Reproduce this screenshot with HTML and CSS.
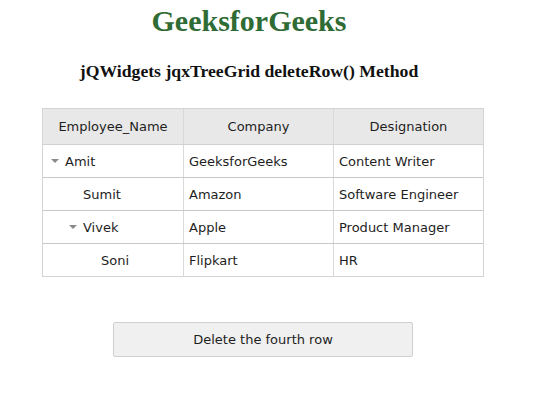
FILE: index.html
```html
<!DOCTYPE html>
<html>
<head>
<meta charset="utf-8">
<link rel="stylesheet" href="styles.css">
</head>
<body>
<div class="page">
  <h1 class="title">GeeksforGeeks</h1>
  <h3 class="subtitle">jQWidgets jqxTreeGrid deleteRow() Method</h3>
</div>
<div class="grid">
  <div class="row head">
    <div class="cell c1 center">Employee_Name</div>
    <div class="cell c2 center">Company</div>
    <div class="cell c3 center">Designation</div>
  </div>
  <div class="row">
    <div class="cell c1 lvl0"><span class="arrow"></span>Amit</div>
    <div class="cell c2">GeeksforGeeks</div>
    <div class="cell c3">Content Writer</div>
  </div>
  <div class="row">
    <div class="cell c1 lvl1">Sumit</div>
    <div class="cell c2">Amazon</div>
    <div class="cell c3">Software Engineer</div>
  </div>
  <div class="row">
    <div class="cell c1 lvl1b"><span class="arrow"></span>Vivek</div>
    <div class="cell c2">Apple</div>
    <div class="cell c3">Product Manager</div>
  </div>
  <div class="row last">
    <div class="cell c1 lvl2">Soni</div>
    <div class="cell c2">Flipkart</div>
    <div class="cell c3">HR</div>
  </div>
</div>
<div class="actions">
  <button class="btn">Delete the fourth row</button>
</div>
</body>
</html>
```
FILE: styles.css
```css
html, body { margin: 0; padding: 0; background: #fff; }
body { padding: 0 8px; }
.page { width: 482px; text-align: center; }
.title {
  font-family: "Liberation Serif", "Times New Roman", serif;
  font-weight: bold;
  font-size: 30px;
  color: #2f6b35;
  margin: 0;
  padding-top: 4px;
  line-height: 34px;
}
.subtitle {
  font-family: "Liberation Serif", "Times New Roman", serif;
  font-weight: bold;
  font-size: 17.7px;
  color: #111;
  margin: 22px 0 0 0;
  line-height: 22px;
}
.grid {
  margin: 26px 0 0 34px;
  width: 440px;
  border: 1px solid #d4d4d4;
  font-family: "DejaVu Sans", Verdana, sans-serif;
  font-size: 13px;
  color: #1e1e1e;
}
.row { display: flex; height: 32px; border-bottom: 1px solid #c8c8c8; }
.row.last { border-bottom: none; height: 32px; }
.row.head { height: 35px; background: #e8e8e8; border-bottom: 1px solid #d0d0d0; }
.cell { display: flex; align-items: center; box-sizing: border-box; padding-left: 5px; }
.cell + .cell { border-left: 1px solid #d9d9d9; }
.c1 { width: 140px; }
.c2 { width: 150px; }
.c3 { width: 150px; }
.center { justify-content: center; padding-left: 0; }
.lvl0 { padding-left: 8px; }
.lvl1 { padding-left: 40px; }
.lvl1b { padding-left: 26px; }
.lvl2 { padding-left: 58px; }
.arrow {
  display: inline-block;
  width: 0; height: 0;
  border-left: 4px solid transparent;
  border-right: 4px solid transparent;
  border-top: 4px solid #8a8a8a;
  margin-right: 6px;
}
.actions { margin: 45px 0 0 105px; }
.btn {
  width: 300px;
  height: 35px;
  background: #f0f0f0;
  border: 1px solid #cfcfcf;
  border-radius: 2px;
  font-family: "DejaVu Sans", Verdana, sans-serif;
  font-size: 13px;
  color: #1e1e1e;
  padding: 0;
}
```
